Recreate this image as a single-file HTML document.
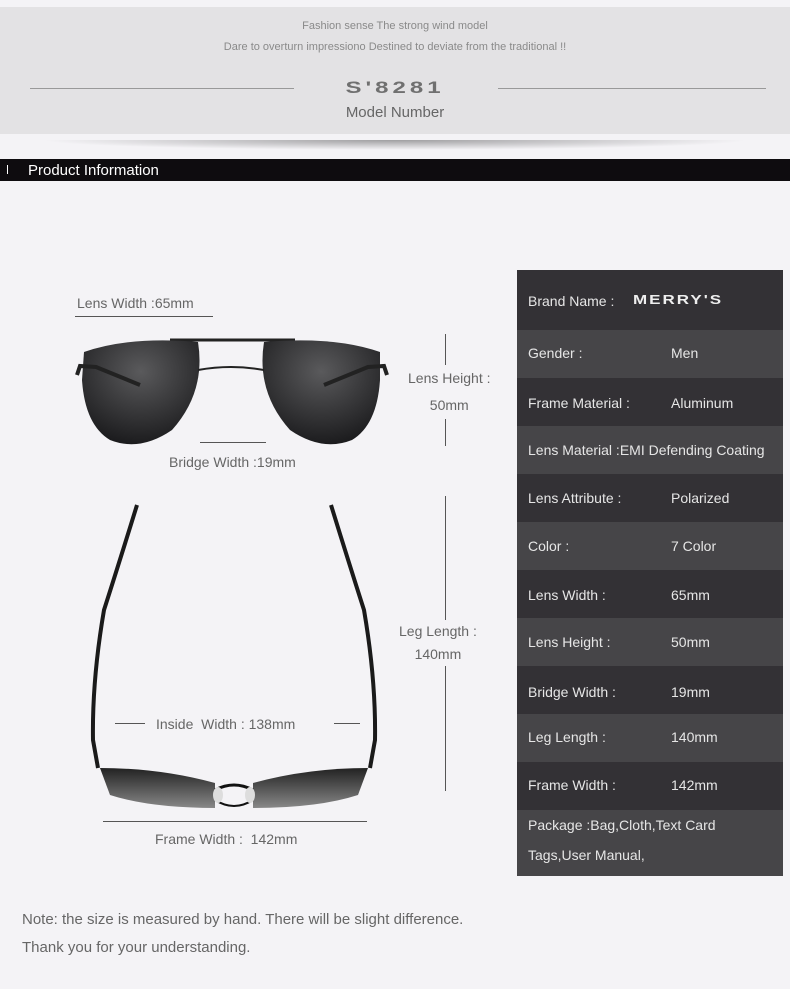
<!DOCTYPE html><html><head><style>
body{margin:0;width:790px;height:989px;background:#f4f3f6;font-family:"Liberation Sans",sans-serif;position:relative;overflow:hidden}
.a{position:absolute}
.hd{left:0;top:7px;width:790px;height:127px;background:#e3e2e4}
.t{color:#8a8a8a;font-size:11px;width:790px;text-align:center;left:0}
.row{position:absolute;left:517px;width:266px;color:#e6e6e6;font-size:14px}
.row span{position:absolute;left:11px}
.row b{position:absolute;left:154px;font-weight:normal}
.lb{color:#666;font-size:14px;white-space:nowrap}
</style></head><body>
<div class="a hd"></div>
<div class="a t" style="top:20px">Fashion sense The strong wind model</div>
<div class="a t" style="top:41px">Dare to overturn impressiono Destined to deviate from the traditional !!</div>
<div class="a" style="left:30px;top:88px;width:264px;height:1px;background:#999"></div>
<div class="a" style="left:498px;top:88px;width:268px;height:1px;background:#999"></div>
<div class="a" style="left:300px;top:74px;width:190px;text-align:center;font-size:24px;font-weight:bold;color:#707070;letter-spacing:4px;transform:scaleY(.7)">S'8281</div>
<div class="a" style="left:0;width:790px;text-align:center;top:104px;font-size:15px;color:#666">Model Number</div>
<div class="a" style="left:40px;top:140px;width:710px;height:10px;background:radial-gradient(ellipse at center top,rgba(0,0,0,.35),rgba(0,0,0,0) 70%)"></div>
<div class="a" style="left:0;top:159px;width:790px;height:22px;background:#0e0c0f"></div>
<div class="a" style="left:7px;top:165px;width:1px;height:9px;background:#fff"></div>
<div class="a" style="left:28px;top:162px;color:#fff;font-size:15px">Product Information</div>

<svg class="a" style="left:0;top:0" width="500" height="989" viewBox="0 0 500 989">
<defs><radialGradient id="g" cx="50%" cy="30%" r="70%"><stop offset="0" stop-color="#5a5a5c"/><stop offset="1" stop-color="#1c1c1e"/></radialGradient>
<linearGradient id="h" x1="0" y1="0" x2="0" y2="1"><stop offset="0" stop-color="#222"/><stop offset="1" stop-color="#888"/></linearGradient></defs>
<line x1="170" y1="340" x2="295" y2="340" stroke="#222" stroke-width="3"/>
<path d="M84 352 Q130 336 198 342 Q206 392 172 430 Q140 452 110 440 Q85 425 82 380 Z" fill="url(#g)"/>
<path d="M380 352 Q334 336 264 342 Q256 392 290 430 Q322 452 352 440 Q377 425 380 380 Z" fill="url(#g)"/>
<path d="M77 375 L80 366 L96 367 L140 385" stroke="#222" stroke-width="4" fill="none"/>
<path d="M387 375 L384 366 L368 367 L324 385" stroke="#222" stroke-width="4" fill="none"/>
<path d="M198 370 Q231 364 264 370" stroke="#222" stroke-width="2" fill="none"/>
<path d="M137 505 Q120 560 104 610 Q92 680 93 740 L98 768" stroke="#1a1a1a" stroke-width="4" fill="none"/>
<path d="M331 505 Q348 560 364 610 Q376 680 375 740 L370 768" stroke="#1a1a1a" stroke-width="4" fill="none"/>
<path d="M100 768 Q160 768 215 783 L215 808 Q150 808 110 795Z" fill="url(#h)"/>
<path d="M368 768 Q308 768 253 783 L253 808 Q318 808 358 795Z" fill="url(#h)"/>
<path d="M215 790 Q234 780 253 790" stroke="#111" stroke-width="3" fill="none"/>
<path d="M215 800 Q234 812 253 800" stroke="#111" stroke-width="2" fill="none"/>
<ellipse cx="218" cy="795" rx="5" ry="8" fill="#ddd"/><ellipse cx="250" cy="795" rx="5" ry="8" fill="#ddd"/>
</svg>

<div class="a lb" style="left:77px;top:295px">Lens Width :65mm</div>
<div class="a" style="left:75px;top:316px;width:138px;height:1px;background:#555"></div>
<div class="a" style="left:200px;top:442px;width:66px;height:1px;background:#555"></div>
<div class="a lb" style="left:169px;top:454px">Bridge Width :19mm</div>
<div class="a" style="left:445px;top:334px;width:1px;height:112px;background:#555"></div>
<div class="a lb" style="left:408px;top:365px;background:#f4f3f6;line-height:27px;text-align:center">Lens Height :<br>50mm</div>

<div class="a" style="left:115px;top:723px;width:30px;height:1px;background:#555"></div>
<div class="a" style="left:334px;top:723px;width:26px;height:1px;background:#555"></div>
<div class="a lb" style="left:156px;top:716px">Inside &nbsp;Width : 138mm</div>
<div class="a" style="left:103px;top:821px;width:264px;height:1px;background:#555"></div>
<div class="a lb" style="left:155px;top:831px">Frame Width : &nbsp;142mm</div>
<div class="a" style="left:445px;top:496px;width:1px;height:295px;background:#555"></div>
<div class="a lb" style="left:399px;top:620px;background:#f4f3f6;line-height:23px;text-align:center">Leg Length :<br>140mm</div>

<div class="row" style="top:270px;height:60px;background:#333135"><span style="top:23px">Brand Name :</span><b style="left:116px;top:20px;font-weight:bold;font-size:17px;letter-spacing:2px;color:#eee;transform:scaleY(.75)">MERRY'S</b></div>
<div class="row" style="top:330px;height:48px;background:#464548"><span style="top:15px">Gender :</span><b style="top:15px">Men</b></div>
<div class="row" style="top:378px;height:48px;background:#333135"><span style="top:17px">Frame Material :</span><b style="top:17px">Aluminum</b></div>
<div class="row" style="top:426px;height:48px;background:#464548"><span style="top:16px;white-space:nowrap">Lens Material :EMI Defending Coating</span></div>
<div class="row" style="top:474px;height:48px;background:#333135"><span style="top:16px">Lens Attribute :</span><b style="top:16px">Polarized</b></div>
<div class="row" style="top:522px;height:48px;background:#464548"><span style="top:16px">Color :</span><b style="top:16px">7 Color</b></div>
<div class="row" style="top:570px;height:48px;background:#333135"><span style="top:17px">Lens Width :</span><b style="top:17px">65mm</b></div>
<div class="row" style="top:618px;height:48px;background:#464548"><span style="top:16px">Lens Height :</span><b style="top:16px">50mm</b></div>
<div class="row" style="top:666px;height:48px;background:#333135"><span style="top:18px">Bridge Width :</span><b style="top:18px">19mm</b></div>
<div class="row" style="top:714px;height:48px;background:#464548"><span style="top:15px">Leg Length :</span><b style="top:15px">140mm</b></div>
<div class="row" style="top:762px;height:48px;background:#333135"><span style="top:15px">Frame Width :</span><b style="top:15px">142mm</b></div>
<div class="row" style="top:810px;height:66px;background:#464548"><span style="top:0px;line-height:30px">Package :Bag,Cloth,Text Card<br>Tags,User Manual,</span></div>

<div class="a" style="left:22px;top:906px;font-size:15px;color:#666;line-height:28px">Note: the size is measured by hand. There will be slight difference.<br>Thank you for your understanding.</div>
</body></html>
